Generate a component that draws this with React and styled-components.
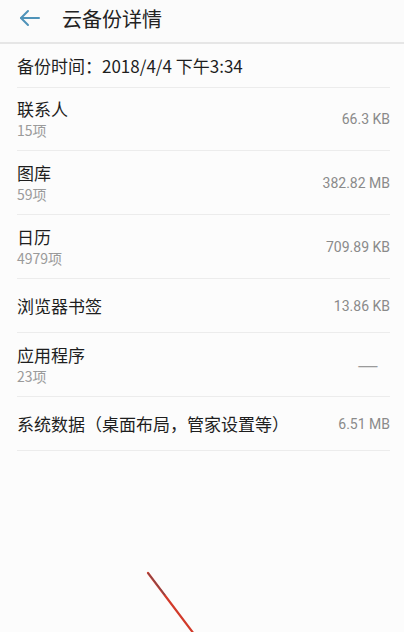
import React from 'react';
import styled, { createGlobalStyle } from 'styled-components';

const Global = createGlobalStyle`
  html, body { margin: 0; padding: 0; background: #fcfcfc; }
  body { font-family: "Noto Sans CJK SC", "Noto Sans", Roboto, sans-serif; }
`;

const Page = styled.div`
  position: relative;
  width: 404px;
  height: 632px;
  overflow: hidden;
  background: #fcfcfc;
`;

const Header = styled.div`
  height: 42px;
  display: flex;
  align-items: center;
  padding-left: 18px;
  background: #fbfbfb;
  border-bottom: 2px solid #e6e6e6;
`;

const Back = styled.div`
  width: 24px;
  height: 24px;
  display: flex;
  align-items: center;
  margin-right: 20px;
  margin-top: -6px;
`;

const Title = styled.div`
  font-size: 20px;
  color: #222;
  margin-top: -6px;
`;

const List = styled.div`
  padding: 0 14px 0 17px;
`;

const Row = styled.div`
  height: ${({ h }) => h}px;
  display: flex;
  align-items: center;
  justify-content: space-between;
  border-bottom: 1px solid #ececec;
  box-sizing: border-box;
`;

const Info = styled.div`
  display: flex;
  flex-direction: column;
`;

const Name = styled.div`
  font-size: ${({ size }) => size || 17}px;
  color: #1e1e1e;
  line-height: 22px;
`;

const Sub = styled.div`
  font-size: 14px;
  color: #9a9a9a;
  line-height: 20px;
`;

const Value = styled.div`
  font-family: Roboto, "Noto Sans", sans-serif;
  font-size: 14px;
  color: #8a8a8a;
  padding-right: ${({ pad }) => pad || 0}px;
`;

const Dash = styled.span`
  font-family: "Noto Sans", sans-serif;
  font-size: 16px;
  color: #9a9a9a;
  display: inline-block;
  transform: scaleX(1.3);
`;

const Mark = styled.svg`
  position: absolute;
  left: 0;
  top: 0;
  pointer-events: none;
`;

const items = [
  { name: '联系人', sub: '15项', value: '66.3 KB', h: 63 },
  { name: '图库', sub: '59项', value: '382.82 MB', h: 64 },
  { name: '日历', sub: '4979项', value: '709.89 KB', h: 64 },
  { name: '浏览器书签', value: '13.86 KB', h: 54 },
  { name: '应用程序', sub: '23项', dash: true, pad: 14, h: 64 },
  { name: '系统数据（桌面布局，管家设置等）', value: '6.51 MB', h: 54 },
];

export default function App() {
  return (
    <Page>
      <Global />
      <Header>
        <Back>
          <svg width="24" height="24" viewBox="0 0 24 24" fill="none" stroke="#4f93b9" strokeWidth="2" strokeLinecap="round" strokeLinejoin="round">
            <path d="M21 12H3" />
            <path d="M10 5l-7 7 7 7" />
          </svg>
        </Back>
        <Title>云备份详情</Title>
      </Header>
      <List>
        <Row h={44}>
          <Name size={17}>备份时间：2018/4/4 下午3:34</Name>
        </Row>
        {items.map((it) => (
          <Row key={it.name} h={it.h}>
            <Info>
              <Name>{it.name}</Name>
              {it.sub && <Sub>{it.sub}</Sub>}
            </Info>
            <Value pad={it.pad}>{it.dash ? <Dash>—</Dash> : it.value}</Value>
          </Row>
        ))}
      </List>
      <Mark width="404" height="632">
        <line x1="148" y1="573" x2="194" y2="634" stroke="#d23a2a" strokeWidth="2.2" strokeLinecap="round" />
        <line x1="148" y1="573" x2="165" y2="595" stroke="#7a4a50" strokeWidth="1.2" />
      </Mark>
    </Page>
  );
}
